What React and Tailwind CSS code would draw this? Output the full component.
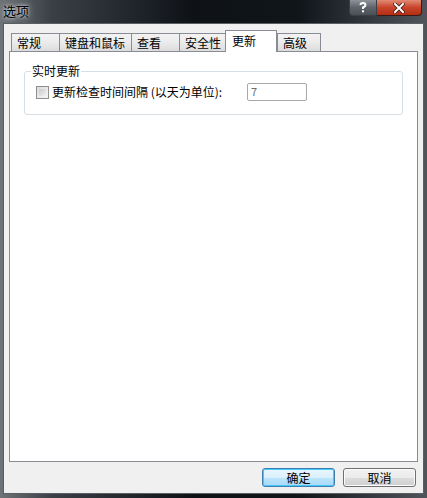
import React from 'react';

const tabs = [
    { label: '常规', w: 'w-[48px]' },
    { label: '键盘和鼠标', w: 'w-[72px]' },
    { label: '查看', w: 'w-[48px]' },
    { label: '安全性', w: 'w-[46px]' },
    { label: '更新', w: 'w-[52px]', active: true },
    { label: '高级', w: 'w-[44px]' },
];

const font = { fontFamily: '"Noto Sans CJK SC", "Liberation Sans", sans-serif' };

const App = () => {
    return (
        <div
            className="w-[427px] h-[498px] flex flex-col bg-[linear-gradient(90deg,#6e7378_0%,#3b4046_12%,#0e1217_45%,#10151a_70%,#4f555a_100%)] text-[12px] text-black"
            style={font}
        >
            {/* заголовок окна */}
            <div className="h-[23px] flex items-start shrink-0">
                <div className="pl-[3px] pt-[3px] text-[13px] leading-[16px] text-black [text-shadow:0_0_6px_#d8dde0,0_0_3px_#d8dde0]">选项</div>
                <div className="flex-1" />
                <div className="flex mr-[5px]">
                    <div className="w-[28px] h-[16px] rounded-bl-[4px] border border-t-0 border-[#3a3f44] bg-[linear-gradient(#8d9398,#5e6469_50%,#4a5055)] flex items-center justify-center">
                        <svg width="8" height="11" viewBox="0 0 8 11">
                            <path d="M1.5 3 Q1.5 1 4 1 Q6.5 1 6.5 3 Q6.5 4.5 4 5.5 L4 7" fill="none" stroke="#ffffff" strokeWidth="2" />
                            <rect x="3" y="8.3" width="2" height="2" fill="#ffffff" />
                        </svg>
                    </div>
                    <div className="w-[45px] h-[16px] rounded-br-[4px] border border-t-0 border-l-0 border-[#3a1a14] bg-[linear-gradient(#e28a74,#c8452b_50%,#b32d12)] flex items-center justify-center">
                        <svg width="12" height="10" viewBox="0 0 12 10">
                            <path d="M2 1 L10 9 M10 1 L2 9" stroke="#3a1a14" strokeWidth="3.6" strokeLinecap="square" />
                            <path d="M2 1 L10 9 M10 1 L2 9" stroke="#ffffff" strokeWidth="2" strokeLinecap="square" />
                        </svg>
                    </div>
                </div>
            </div>

            {/* клиентская область */}
            <div className="flex-1 mx-[3px] mb-[4px] bg-[#f0f0f0] border border-[#5a5f64] flex flex-col px-[5px]">
                {/* вкладки */}
                <div className="flex items-end h-[27px] pl-[2px] pt-[6px]">
                    {tabs.map((t) =>
                        t.active ? (
                            <div
                                key={t.label}
                                className={`${t.w} h-[22px] -mb-px relative z-10 bg-white border border-b-0 border-[#898c95] pl-[6px] pt-[2px] leading-[15px] text-[12px]`}
                            >
                                {t.label}
                            </div>
                        ) : (
                            <div
                                key={t.label}
                                className={`${t.w} h-[18px] border border-r-0 last:border-r border-b-0 border-[#898c95] bg-[linear-gradient(#f3f3f3,#ebebeb_50%,#dcdcdc)] pl-[5px] pt-[1px] leading-[15px] text-[12px]`}
                            >
                                {t.label}
                            </div>
                        )
                    )}
                </div>

                {/* страница вкладки */}
                <div className="h-[411px] bg-white border border-[#898c95] px-[14px] pt-[11px]">
                    <fieldset className="border border-[#d5dfe5] rounded-[3px] px-[11px] pb-[13px] pt-[4px]">
                        <legend className="px-[1px] -ml-[5px] text-[12px] leading-[16px]">实时更新</legend>
                        <div className="flex items-center h-[18px]">
                            <div className="w-[13px] h-[13px] border border-[#8f8f8f] bg-[linear-gradient(135deg,#dcdcdc,#f6f6f6)] p-[2px]">
                                <div className="w-full h-full bg-[linear-gradient(135deg,#cbcbcb,#f0f0f0)]" />
                            </div>
                            <span className="ml-[3px] text-[12px] leading-[16px] w-[195px]">更新检查时间间隔 (以天为单位):</span>
                            <div className="w-[60px] h-[18px] border border-[#a5a9ae] rounded-[2px] bg-white pl-[3px] text-[11px] leading-[15px] text-[#6d6d6d]">7</div>
                        </div>
                    </fieldset>
                </div>

                {/* кнопки */}
                <div className="flex justify-end gap-[8px] mt-[6px] mr-[2px]">
                    <button className="w-[73px] h-[19px] rounded-[3px] border border-[#3c7fb1] bg-[linear-gradient(#eaf6fd,#d9f0fc_50%,#bee6fd_51%,#a7d9f5)] shadow-[inset_0_0_0_1px_#48c8f8] text-[12px] leading-[15px]">确定</button>
                    <button className="w-[73px] h-[19px] rounded-[3px] border border-[#707070] bg-[linear-gradient(#f2f2f2,#ebebeb_50%,#dddddd_51%,#cfcfcf)] shadow-[inset_0_0_0_1px_#fcfcfc] text-[12px] leading-[15px]">取消</button>
                </div>
            </div>
        </div>
    );
};

export default App;
